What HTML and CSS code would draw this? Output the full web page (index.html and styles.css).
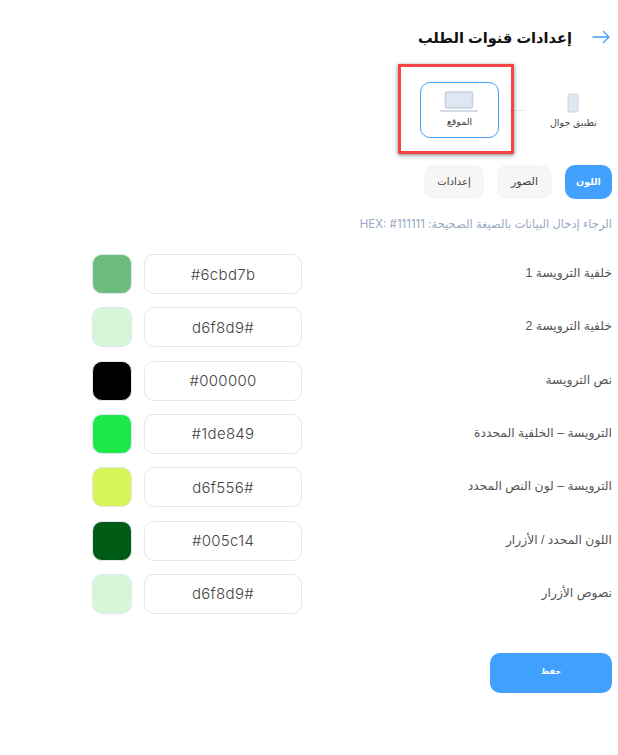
FILE: index.html
```html
<!DOCTYPE html>
<html lang="ar" dir="rtl">
<head>
    <meta charset="UTF-8">
    <meta name="viewport" content="width=device-width, initial-scale=1.0">
    <title>إعدادات قنوات الطلب</title>
    <link rel="stylesheet" href="styles.css">
</head>
<body>
    <main class="page">
      <header class="page-head">
        <svg class="back-arrow" width="18" height="14" viewBox="0 0 18 14" fill="none" stroke="#42a0ff" stroke-width="1.3">
          <path d="M0.5 7H17M11 1l6 6-6 6"/>
        </svg>
        <h1>إعدادات قنوات الطلب</h1>
      </header>

      <div class="channels">
        <div class="channel">
          <svg width="12" height="20" viewBox="0 0 12 20"><rect x="1" y="1" width="10" height="18" rx="1.5" fill="#dfe7f2" stroke="#c6d0de"/></svg>
          <span>تطبيق جوال</span>
        </div>
        <div class="channel-line"></div>
        <div class="channel channel-active">
          <svg width="38" height="21" viewBox="0 0 38 21">
            <rect x="5.5" y="1" width="27" height="16" rx="2" fill="#dfe7f2" stroke="#c6d0de" stroke-width="1.6"/>
            <path d="M0 20h38" stroke="#c6d0de" stroke-width="1.4"/>
          </svg>
          <span>الموقع</span>
        </div>
        <div class="callout"></div>
      </div>

      <nav class="tabs">
        <button class="tab tab-active">اللون</button>
        <button class="tab tab-images">الصور</button>
        <button class="tab tab-settings">إعدادات</button>
      </nav>

      <p class="hint">الرجاء إدخال البيانات بالصيغة الصحيحة: HEX: #111111</p>

      <section class="colors">
        <div class="color-row">
          <label>خلفية الترويسة 1</label>
          <div class="color-field"><input type="text" value="#6cbd7b"><span class="swatch swatch-header1"></span></div>
        </div>
        <div class="color-row">
          <label>خلفية الترويسة 2</label>
          <div class="color-field"><input type="text" value="#d6f8d9"><span class="swatch swatch-header2"></span></div>
        </div>
        <div class="color-row">
          <label>نص الترويسة</label>
          <div class="color-field"><input type="text" value="#000000"><span class="swatch swatch-text"></span></div>
        </div>
        <div class="color-row">
          <label>الترويسة – الخلفية المحددة</label>
          <div class="color-field"><input type="text" value="#1de849"><span class="swatch swatch-selected"></span></div>
        </div>
        <div class="color-row">
          <label>الترويسة – لون النص المحدد</label>
          <div class="color-field"><input type="text" value="#d6f556"><span class="swatch swatch-selected-text"></span></div>
        </div>
        <div class="color-row">
          <label>اللون المحدد / الأزرار</label>
          <div class="color-field"><input type="text" value="#005c14"><span class="swatch swatch-buttons"></span></div>
        </div>
        <div class="color-row">
          <label>نصوص الأزرار</label>
          <div class="color-field"><input type="text" value="#d6f8d9"><span class="swatch swatch-button-text"></span></div>
        </div>
      </section>

      <button class="save">حفظ</button>
    </main>
</body>
</html>
```

FILE: styles.css
```css
body {
  margin: 0;
  background: #fff;
  color: #333;
  font-family: "Liberation Sans", "DejaVu Sans", sans-serif;
}
.page {
  padding: 0 6px 0 6px;
  height: 755px;
  box-sizing: border-box;
}
.page-head {
  display: flex;
  align-items: center;
  gap: 20px;
  height: 74px;
  padding-right: 2px;
}
.page-head h1 {
  margin: 0;
  font-size: 14.6px;
  font-weight: bold;
  color: #111;
}
.channels {
  position: relative;
  display: flex;
  align-items: center;
  height: 56px;
  margin-top: 8px;
  padding-right: 15px;
}
.channel {
  display: flex;
  flex-direction: column;
  align-items: center;
  gap: 4px;
  font-size: 9.5px;
  color: #444;
}
.channel-line {
  width: 17px;
  height: 1px;
  margin: 0 25px 0 25px;
  background: #dfe7f2;
}
.channel-active {
  justify-content: center;
  width: 79px;
  height: 56px;
  margin-right: -16px;
  padding-bottom: 2px;
  box-sizing: border-box;
  border: 1px solid #42a0ff;
  border-radius: 10px;
}
.callout {
  position: absolute;
  top: -18px;
  left: 392px;
  width: 116px;
  height: 90px;
  box-sizing: border-box;
  border: 3px solid #f44545;
  box-shadow: 0 1px 4px rgba(0, 0, 0, 0.5);
}
.tabs {
  display: flex;
  gap: 13px;
  margin-top: 27px;
}
.tab {
  height: 34px;
  width: 47px;
  padding: 0 0 2px;
  border: 0;
  border-radius: 10px;
  background: #f6f6f6;
  color: #444;
  font-family: inherit;
  font-size: 10px;
  cursor: pointer;
}
.tab-active {
  background: #42a0ff;
  color: #fff;
  font-size: 9.5px;
  font-weight: bold;
}
.tab-images {
  width: 55px;
  font-size: 11px;
}
.tab-settings {
  width: 60px;
}
.hint {
  margin: 18px 0 0;
  font-family: Inter, "DejaVu Sans", sans-serif;
  font-size: 11.5px;
  line-height: 14px;
  color: #9aa9c2;
}
.colors {
  display: flex;
  flex-direction: column;
  gap: 13.33px;
  margin: 23px 0 0 86px;
}
.color-row {
  display: flex;
  justify-content: space-between;
  align-items: center;
  font-size: 12.3px;
  color: #555;
}
.color-row label {
  padding-bottom: 2px;
}
.color-field {
  display: flex;
  gap: 12px;
}
.color-field input {
  width: 158px;
  height: 40px;
  box-sizing: border-box;
  border: 1px solid #dfe7f2;
  border-radius: 10px;
  background: #fff;
  color: #444;
  font-family: Inter, sans-serif;
  font-size: 15px;
  font-weight: 300;
  letter-spacing: 0.3px;
  text-align: center;
}
.swatch {
  width: 40px;
  height: 40px;
  box-sizing: border-box;
  border: 1px solid #dfe7f2;
  border-radius: 10px;
}
.swatch-header1 { background: #6cbd7b; }
.swatch-header2 { background: #d6f8d9; }
.swatch-text { background: #000000; }
.swatch-selected { background: #1de849; }
.swatch-selected-text { background: #d6f556; }
.swatch-buttons { background: #005c14; }
.swatch-button-text { background: #d6f8d9; }
.save {
  display: block;
  width: 122px;
  height: 40px;
  margin-top: 39px;
  padding: 0 0 2px;
  border: 0;
  border-radius: 10px;
  background: #42a0ff;
  color: #fff;
  font-family: inherit;
  font-size: 8px;
  font-weight: bold;
  cursor: pointer;
}
```
